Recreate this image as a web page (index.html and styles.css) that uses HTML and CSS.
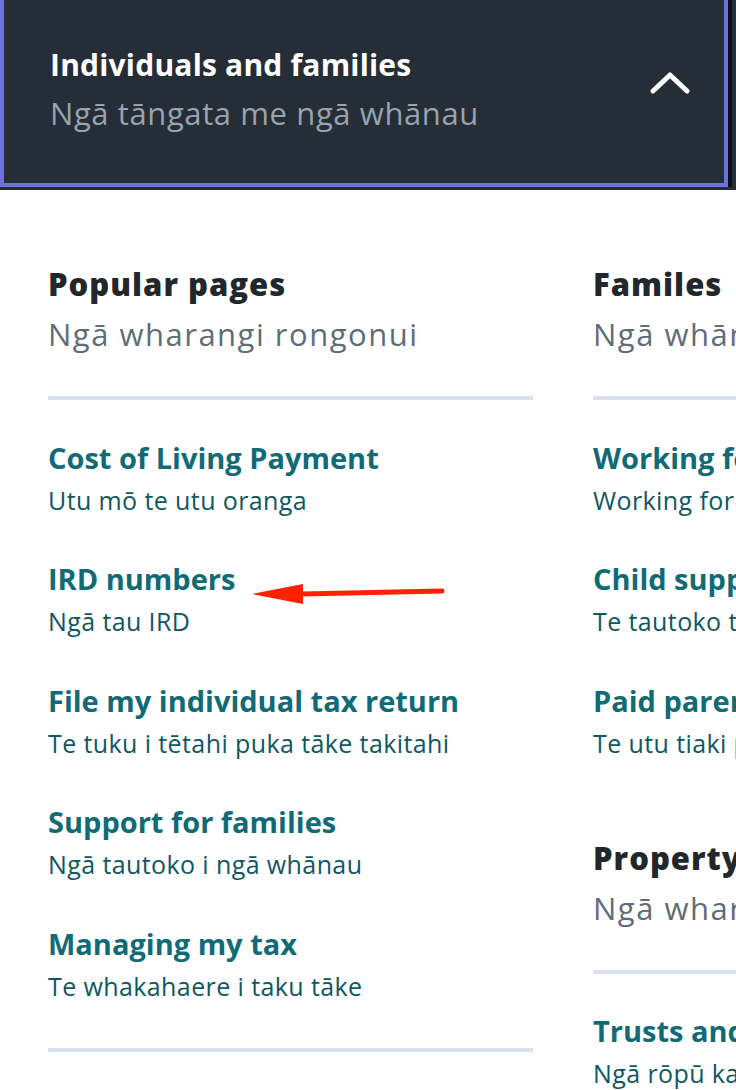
FILE: index.html
```html
<!DOCTYPE html>
<html>
  <head>
    <title>Individuals and families</title>
    <meta charset="utf-8" />
    <link rel="stylesheet" href="styles.css">
  </head>
  <body>
    <div class="topbar">
      <button class="toggle" type="button">
        <span class="toggle-text">
          <span class="toggle-title">Individuals and families</span>
          <span class="toggle-sub">Ngā tāngata me ngā whānau</span>
        </span>
        <svg class="chevron" width="40" height="24" viewBox="0 0 40 24">
          <path d="M3 20 L20 4 L37 20" fill="none" stroke="#fff" stroke-width="5" stroke-linecap="round" stroke-linejoin="round"/>
        </svg>
      </button>
    </div>

    <div class="menu">
      <!-- left column -->
      <div class="col">
        <div class="section">
          <h2>Popular pages</h2>
          <p class="section-sub">Ngā wharangi rongonui</p>
          <ul class="links">
            <li><a href="#">Cost of Living Payment</a><span>Utu mō te utu oranga</span></li>
            <li class="marked"><a href="#">IRD numbers</a><span>Ngā tau IRD</span>
              <svg class="arrow" width="200" height="26" viewBox="0 0 200 26">
                <path d="M50 12 L190 9" stroke="#ff2200" stroke-width="5" stroke-linecap="round"/>
                <path d="M0 12 L51 2 L51 22 Z" fill="#ff2200"/>
              </svg>
            </li>
            <li><a href="#">File my individual tax return</a><span>Te tuku i tētahi puka tāke takitahi</span></li>
            <li><a href="#">Support for families</a><span>Ngā tautoko i ngā whānau</span></li>
            <li><a href="#">Managing my tax</a><span>Te whakahaere i taku tāke</span></li>
          </ul>
          <div class="rule"></div>
        </div>
      </div>

      <!-- right column -->
      <div class="col">
        <div class="section">
          <h2>Familes</h2>
          <p class="section-sub">Ngā whānau</p>
          <ul class="links">
            <li><a href="#">Working for Families</a><span>Working for Families</span></li>
            <li><a href="#">Child support</a><span>Te tautoko tamariki</span></li>
            <li><a href="#">Paid parental leave</a><span>Te utu tiaki pēpi</span></li>
          </ul>
        </div>
        <div class="section next">
          <h2>Property</h2>
          <p class="section-sub">Ngā whare me ngā whenua</p>
          <ul class="links">
            <li><a href="#">Trusts and estates</a><span>Ngā rōpū kaitiaki</span></li>
          </ul>
        </div>
      </div>
    </div>
  </body>
</html>
```

FILE: styles.css
```css
body {
  margin: 0;
  overflow: hidden;
  background: #fff;
  font-family: "Open Sans", "Liberation Sans", sans-serif;
}
.topbar {
  background: #252d36;
  height: 190px;
  display: flex;
}
.toggle {
  width: 728px;
  height: 187px;
  box-sizing: border-box;
  border: 4px solid #6c71df;
  border-top: none;
  background: #252d36;
  box-shadow: 4px 0 0 #0e1114;
  display: flex;
  align-items: center;
  justify-content: space-between;
  padding: 0 34px 0 46px;
  font-family: inherit;
  text-align: left;
}
.toggle-text {
  display: flex;
  flex-direction: column;
  margin-top: -6px;
}
.toggle-title {
  color: #fff;
  font-size: 30px;
  font-weight: 700;
  line-height: 48px;
  letter-spacing: 0.2px;
}
.toggle-sub {
  color: #97a3b0;
  font-size: 31px;
  line-height: 48px;
  letter-spacing: 0.6px;
}
.chevron {
  margin-top: -18px;
}

.menu {
  display: flex;
  gap: 60px;
  padding: 69px 0 0 48px;
}
.col {
  width: 485px;
  flex-shrink: 0;
}
.section h2 {
  margin: 0;
  font-size: 31px;
  font-weight: 800;
  line-height: 50px;
  color: #22272b;
  letter-spacing: 1px;
}
.section-sub {
  margin: 0;
  font-size: 31px;
  line-height: 50px;
  color: #5f6d79;
  padding-bottom: 37px;
  border-bottom: 4px solid #d9e2eb;
  white-space: nowrap;
  letter-spacing: 1.5px;
}
.section.next {
  margin-top: 68px;
}
.links {
  list-style: none;
  margin: 0;
  padding: 0;
}
.links li {
  margin-top: 35.5px;
  position: relative;
}
.links a {
  display: block;
  font-size: 29px;
  font-weight: 700;
  line-height: 43px;
  color: #116b76;
  text-decoration: none;
  white-space: nowrap;
}
.links span {
  display: block;
  font-size: 25px;
  line-height: 43px;
  color: #0f5861;
  white-space: nowrap;
  letter-spacing: 0.4px;
}
.rule {
  margin-top: 40px;
  border-top: 4px solid #d9e2eb;
}
.arrow {
  position: absolute;
  left: 204px;
  top: 25px;
}
```
